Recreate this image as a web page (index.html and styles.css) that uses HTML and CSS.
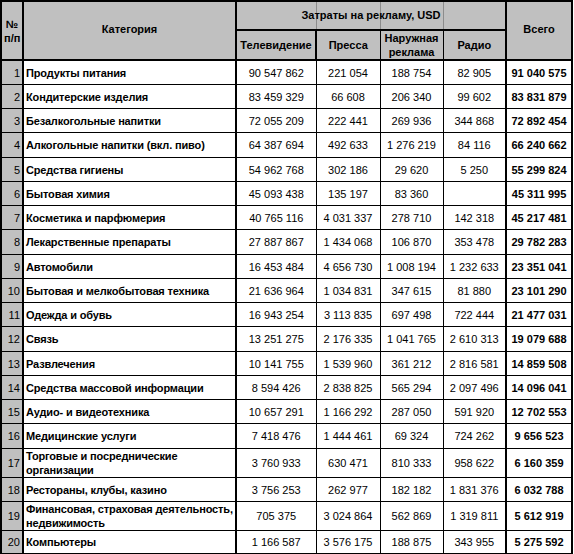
FILE: index.html
```html
<!DOCTYPE html>
<html lang="ru">
<head>
    <meta charset="UTF-8">
    <meta name="viewport" content="width=device-width, initial-scale=1.0">
    <title>Затраты на рекламу</title>
    <link rel="stylesheet" href="styles.css">
</head>
<body>
    <table class="ad-table">
        <colgroup>
            <col class="c-idx">
            <col class="c-cat">
            <col class="c-tv">
            <col class="c-press">
            <col class="c-out">
            <col class="c-radio">
            <col class="c-total">
        </colgroup>
        <thead>
            <tr class="head-top">
                <th class="idx" rowspan="2">№<br>п/п</th>
                <th class="cat" rowspan="2">Категория</th>
                <th class="group" colspan="4">Затраты на рекламу, USD</th>
                <th class="total" rowspan="2">Всего</th>
            </tr>
            <tr class="head-sub">
                <th class="tv">Телевидение</th>
                <th>Пресса</th>
                <th class="two">Наружная<br>реклама</th>
                <th>Радио</th>
            </tr>
        </thead>
        <tbody>
            <tr><td class="idx">1</td><td class="cat">Продукты питания</td><td>90 547 862</td><td>221 054</td><td>188 754</td><td>82 905</td><td class="total">91 040 575</td></tr>
            <tr><td class="idx">2</td><td class="cat">Кондитерские изделия</td><td>83 459 329</td><td>66 608</td><td>206 340</td><td>99 602</td><td class="total">83 831 879</td></tr>
            <tr><td class="idx">3</td><td class="cat">Безалкогольные напитки</td><td>72 055 209</td><td>222 441</td><td>269 936</td><td>344 868</td><td class="total">72 892 454</td></tr>
            <tr class="tall"><td class="idx">4</td><td class="cat">Алкогольные напитки (вкл. пиво)</td><td>64 387 694</td><td>492 633</td><td>1 276 219</td><td>84 116</td><td class="total">66 240 662</td></tr>
            <tr><td class="idx">5</td><td class="cat">Средства гигиены</td><td>54 962 768</td><td>302 186</td><td>29 620</td><td>5 250</td><td class="total">55 299 824</td></tr>
            <tr><td class="idx">6</td><td class="cat">Бытовая химия</td><td>45 093 438</td><td>135 197</td><td>83 360</td><td></td><td class="total">45 311 995</td></tr>
            <tr><td class="idx">7</td><td class="cat">Косметика и парфюмерия</td><td>40 765 116</td><td>4 031 337</td><td>278 710</td><td>142 318</td><td class="total">45 217 481</td></tr>
            <tr class="tall"><td class="idx">8</td><td class="cat">Лекарственные препараты</td><td>27 887 867</td><td>1 434 068</td><td>106 870</td><td>353 478</td><td class="total">29 782 283</td></tr>
            <tr><td class="idx">9</td><td class="cat">Автомобили</td><td>16 453 484</td><td>4 656 730</td><td>1 008 194</td><td>1 232 633</td><td class="total">23 351 041</td></tr>
            <tr><td class="idx">10</td><td class="cat">Бытовая и мелкобытовая техника</td><td>21 636 964</td><td>1 034 831</td><td>347 615</td><td>81 880</td><td class="total">23 101 290</td></tr>
            <tr><td class="idx">11</td><td class="cat">Одежда и обувь</td><td>16 943 254</td><td>3 113 835</td><td>697 498</td><td>722 444</td><td class="total">21 477 031</td></tr>
            <tr class="tall"><td class="idx">12</td><td class="cat">Связь</td><td>13 251 275</td><td>2 176 335</td><td>1 041 765</td><td>2 610 313</td><td class="total">19 079 688</td></tr>
            <tr><td class="idx">13</td><td class="cat">Развлечения</td><td>10 141 755</td><td>1 539 960</td><td>361 212</td><td>2 816 581</td><td class="total">14 859 508</td></tr>
            <tr><td class="idx">14</td><td class="cat">Средства массовой информации</td><td>8 594 426</td><td>2 838 825</td><td>565 294</td><td>2 097 496</td><td class="total">14 096 041</td></tr>
            <tr><td class="idx">15</td><td class="cat">Аудио- и видеотехника</td><td>10 657 291</td><td>1 166 292</td><td>287 050</td><td>591 920</td><td class="total">12 702 553</td></tr>
            <tr class="tall"><td class="idx">16</td><td class="cat">Медицинские услуги</td><td>7 418 476</td><td>1 444 461</td><td>69 324</td><td>724 262</td><td class="total">9 656 523</td></tr>
            <tr class="double"><td class="idx">17</td><td class="cat">Торговые и посреднические<br>организации</td><td>3 760 933</td><td>630 471</td><td>810 333</td><td>958 622</td><td class="total">6 160 359</td></tr>
            <tr><td class="idx">18</td><td class="cat">Рестораны, клубы, казино</td><td>3 756 253</td><td>262 977</td><td>182 182</td><td>1 831 376</td><td class="total">6 032 788</td></tr>
            <tr class="double"><td class="idx">19</td><td class="cat">Финансовая, страховая деятельность,<br>недвижимость</td><td>705 375</td><td>3 024 864</td><td>562 869</td><td>1 319 811</td><td class="total">5 612 919</td></tr>
            <tr><td class="idx">20</td><td class="cat">Компьютеры</td><td>1 166 587</td><td>3 576 175</td><td>188 875</td><td>343 955</td><td class="total">5 275 592</td></tr>
        </tbody>
    </table>
</body>
</html>
```

FILE: styles.css
```css
body {
    margin: 0;
    background-color: #fff;
    font-family: "Liberation Sans", Arial, sans-serif;
    font-size: 11px;
    color: #000;
}

.ad-table {
    border-collapse: collapse;
    table-layout: fixed;
    width: 573px;
    border: 2px solid #000;
}

.c-idx { width: 22px; }
.c-cat { width: 213px; }
.c-tv { width: 80px; }
.c-press { width: 64px; }
.c-out { width: 63px; }
.c-radio { width: 63px; }
.c-total { width: 66px; }

.ad-table th,
.ad-table td {
    border: 1px solid #000;
    padding: 0 2px;
    text-align: center;
    vertical-align: middle;
    white-space: nowrap;
    line-height: 14px;
}

/* шапка */
.ad-table th {
    background-color: #c0c0c0;
    font-weight: bold;
    border-bottom-width: 2px;
}

.head-top { height: 29px; }
.head-sub { height: 28px; }

.ad-table th.group {
    vertical-align: top;
    padding-top: 6px;
    /* линии сетки под объединённой ячейкой */
    background-image:
        linear-gradient(to right, transparent 79px, #8c8c8c 79px, #8c8c8c 80px, transparent 80px),
        linear-gradient(to right, transparent 143px, #8c8c8c 143px, #8c8c8c 144px, transparent 144px),
        linear-gradient(to right, transparent 206px, #8c8c8c 206px, #8c8c8c 207px, transparent 207px);
}

.ad-table th.tv { border-right-width: 2px; }

.ad-table th.cat,
.ad-table th.total {
    padding-bottom: 4px;
}

/* строки данных */
.ad-table tbody tr { height: 24px; }
.ad-table tbody tr.tall { height: 25px; }
.ad-table tbody tr.double { height: 29px; }

.ad-table td {
    padding-top: 1px;
}

.ad-table tr.double td {
    padding-top: 0;
    padding-bottom: 0;
}

.ad-table .idx {
    border-right-width: 2px;
}

.ad-table td.idx {
    background-color: #c0c0c0;
    text-align: right;
    padding-right: 2px;
}

.ad-table .cat {
    border-right-width: 2px;
}

.ad-table td.cat {
    text-align: left;
    font-weight: bold;
    padding-left: 2px;
    letter-spacing: -0.15px;
}

.ad-table .total {
    border-left-width: 2px;
}

.ad-table td.total {
    font-weight: bold;
}
```
